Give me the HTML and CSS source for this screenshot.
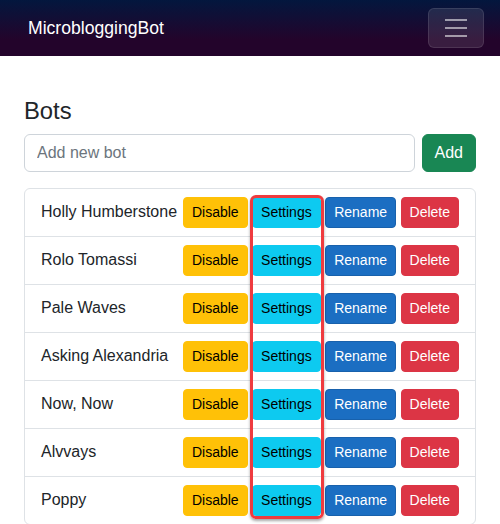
FILE: index.html
```html
<!DOCTYPE html>
<html lang="en">
<head>
    <meta charset="UTF-8">
    <meta name="viewport" content="width=device-width, initial-scale=1.0">
    <title>MicrobloggingBot</title>
    <link rel="stylesheet" href="styles.css">
</head>
<body>
    <div class="top-row">
        <a class="navbar-brand" href="#">MicrobloggingBot</a>
        <button class="navbar-toggler" title="Navigation menu">
            <span class="toggler-icon"></span>
        </button>
    </div>

    <main class="content">
        <h3>Bots</h3>
        <div class="add-row">
            <input type="text" class="form-control" placeholder="Add new bot">
            <button class="btn btn-success">Add</button>
        </div>

        <ul class="list-group">
            <li class="list-item">
                <span>Holly Humberstone</span>
                <div class="actions">
                    <button class="btn btn-sm btn-warning">Disable</button>
                    <button class="btn btn-sm btn-info">Settings</button>
                    <button class="btn btn-sm btn-primary">Rename</button>
                    <button class="btn btn-sm btn-danger">Delete</button>
                </div>
            </li>
            <li class="list-item">
                <span>Rolo Tomassi</span>
                <div class="actions">
                    <button class="btn btn-sm btn-warning">Disable</button>
                    <button class="btn btn-sm btn-info">Settings</button>
                    <button class="btn btn-sm btn-primary">Rename</button>
                    <button class="btn btn-sm btn-danger">Delete</button>
                </div>
            </li>
            <li class="list-item">
                <span>Pale Waves</span>
                <div class="actions">
                    <button class="btn btn-sm btn-warning">Disable</button>
                    <button class="btn btn-sm btn-info">Settings</button>
                    <button class="btn btn-sm btn-primary">Rename</button>
                    <button class="btn btn-sm btn-danger">Delete</button>
                </div>
            </li>
            <li class="list-item">
                <span>Asking Alexandria</span>
                <div class="actions">
                    <button class="btn btn-sm btn-warning">Disable</button>
                    <button class="btn btn-sm btn-info">Settings</button>
                    <button class="btn btn-sm btn-primary">Rename</button>
                    <button class="btn btn-sm btn-danger">Delete</button>
                </div>
            </li>
            <li class="list-item">
                <span>Now, Now</span>
                <div class="actions">
                    <button class="btn btn-sm btn-warning">Disable</button>
                    <button class="btn btn-sm btn-info">Settings</button>
                    <button class="btn btn-sm btn-primary">Rename</button>
                    <button class="btn btn-sm btn-danger">Delete</button>
                </div>
            </li>
            <li class="list-item">
                <span>Alvvays</span>
                <div class="actions">
                    <button class="btn btn-sm btn-warning">Disable</button>
                    <button class="btn btn-sm btn-info">Settings</button>
                    <button class="btn btn-sm btn-primary">Rename</button>
                    <button class="btn btn-sm btn-danger">Delete</button>
                </div>
            </li>
            <li class="list-item">
                <span>Poppy</span>
                <div class="actions">
                    <button class="btn btn-sm btn-warning">Disable</button>
                    <button class="btn btn-sm btn-info">Settings</button>
                    <button class="btn btn-sm btn-primary">Rename</button>
                    <button class="btn btn-sm btn-danger">Delete</button>
                </div>
            </li>
            <!-- highlight box round the Settings column -->
            <li class="highlight"></li>
        </ul>
    </main>
</body>
</html>
```

FILE: styles.css
```css
* {
    box-sizing: border-box;
}
body {
    margin: 0;
    font-family: "Liberation Sans", Arial, sans-serif;
    font-size: 16px;
    line-height: 1.5;
    color: #212529;
    background-color: #fff;
}
.top-row {
    position: relative;
    height: 56px;
    display: flex;
    align-items: center;
    padding-left: 28px;
    background: linear-gradient(180deg, #03173e 0%, #23042b 70%);
}
.navbar-brand {
    color: #fff;
    font-size: 17.6px;
    text-decoration: none;
}
.navbar-toggler {
    position: absolute;
    top: 8px;
    right: 16px;
    width: 56px;
    height: 40px;
    padding: 0;
    background-color: rgba(255,255,255,0.1);
    border: 1px solid rgba(255,255,255,0.1);
    border-radius: 6px;
    display: flex;
    align-items: center;
    justify-content: center;
}
.toggler-icon {
    display: block;
    width: 22px;
    height: 2px;
    background-color: rgba(255,255,255,0.55);
    box-shadow: 0 -8px 0 rgba(255,255,255,0.55), 0 8px 0 rgba(255,255,255,0.55);
}
.content {
    padding: 41px 24px 0;
}
h3 {
    margin: 0 0 8px;
    font-size: 23.8px;
    font-weight: 500;
    line-height: 1.2;
}
.add-row {
    display: flex;
    gap: 7px;
    margin-bottom: 16px;
}
.form-control {
    flex: 1;
    height: 38px;
    padding: 6px 12px;
    font-family: inherit;
    font-size: 16px;
    color: #212529;
    border: 1px solid #ced4da;
    border-radius: 6px;
}
.form-control::placeholder {
    color: #6c757d;
}
.btn {
    display: inline-block;
    padding: 6px 12px;
    font-family: inherit;
    font-size: 16px;
    line-height: 1.5;
    border: 1px solid transparent;
    border-radius: 6px;
    cursor: pointer;
}
.btn-sm {
    padding: 4px 8px;
    font-size: 14px;
    border-radius: 4px;
}
.btn-success {
    color: #fff;
    background-color: #198754;
    border-color: #198754;
}
.btn-warning {
    color: #000;
    background-color: #ffc107;
    border-color: #ffc107;
}
.btn-info {
    color: #000;
    background-color: #0dcaf0;
    border-color: #0dcaf0;
}
.btn-primary {
    color: #fff;
    background-color: #1b6ec2;
    border-color: #1861ac;
}
.btn-danger {
    color: #fff;
    background-color: #dc3545;
    border-color: #dc3545;
}
.list-group {
    position: relative;
    list-style: none;
    margin: 0;
    padding: 0;
    border: 1px solid #dee2e6;
    border-radius: 6px;
}
.list-item {
    display: flex;
    justify-content: space-between;
    align-items: center;
    padding: 8px 16px;
    border-top: 1px solid #dee2e6;
}
.list-item:first-child {
    border-top: none;
}
.highlight {
    position: absolute;
    left: 225px;
    top: 6px;
    width: 74px;
    height: 324px;
    border: 3px solid #ef3b3f;
    border-radius: 6px;
    box-shadow: 0 2px 3px rgba(0,0,0,0.35);
    pointer-events: none;
}
```
